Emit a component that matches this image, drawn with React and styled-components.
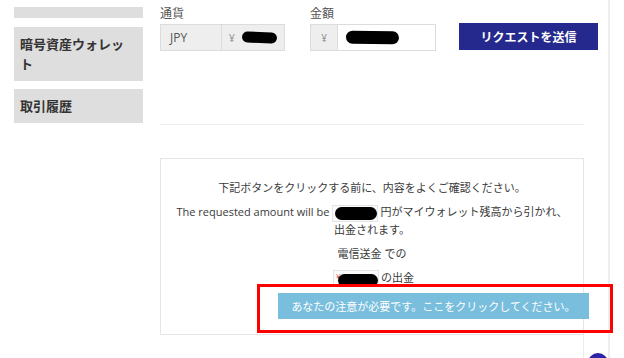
import React from 'react';
import styled, { createGlobalStyle } from 'styled-components';

const Global = createGlobalStyle`
  *, *::before, *::after { box-sizing: border-box; }
  html, body { margin: 0; padding: 0; background: #fff; }
  body {
    width: 624px;
    height: 358px;
    overflow: hidden;
    font-family: "Open Sans", "Noto Sans CJK JP", sans-serif;
    color: #333;
  }
`;

const Page = styled.div`
  position: relative;
  width: 624px;
  height: 358px;
  overflow: hidden;
  display: flex;
  padding-left: 14px;
`;

const Sidebar = styled.nav`
  width: 129px;
  margin-right: 17px;
  padding-top: 7px;
  display: flex;
  flex-direction: column;
  gap: 8px;
  flex-shrink: 0;
`;

const NavItem = styled.div`
  background: #dedede;
  font-family: "Noto Sans CJK JP", sans-serif;
  font-weight: 700;
  font-size: 13px;
  line-height: 20px;
  color: #333;
  padding: ${p => (p.$stub ? '0' : '7px 14px 7px 6px')};
  height: ${p => (p.$stub ? '11px' : 'auto')};
  margin-bottom: ${p => (p.$stub ? '1px' : '0')};
`;

const Main = styled.main`
  width: 424px;
  flex-shrink: 0;
  padding-top: 5px;
  display: flex;
  flex-direction: column;
`;

const FormRow = styled.div`
  display: flex;
  align-items: flex-end;
`;

const Field = styled.div`
  display: flex;
  flex-direction: column;
  flex-shrink: 0;
  margin-right: ${p => p.$mr || 0}px;
`;

const Label = styled.label`
  font-family: "Noto Sans CJK JP", sans-serif;
  font-size: 12px;
  line-height: 16px;
  color: #555;
  margin-bottom: 3px;
`;

const InputGroup = styled.div`
  display: flex;
  width: ${p => p.$w}px;
  height: 27px;
  border: 1px solid #dcdcdc;
`;

const Segment = styled.div`
  display: flex;
  align-items: center;
  width: ${p => (p.$w ? `${p.$w}px` : 'auto')};
  flex: ${p => (p.$w ? '0 0 auto' : '1 1 auto')};
  padding-left: ${p => p.$pl ?? 8}px;
  justify-content: ${p => (p.$center ? 'center' : 'flex-start')};
  background: ${p => (p.$white ? '#fff' : '#eeeeee')};
  border-left: ${p => (p.$first ? 'none' : '1px solid #dcdcdc')};
  font-size: 12px;
  color: #555;
`;

const Yen = styled.span`
  font-size: 10px;
  color: #888;
  margin-right: ${p => (p.$solo ? 0 : 7)}px;
`;

const Blob = styled.span`
  display: inline-block;
  flex-shrink: 0;
  width: ${p => p.$w}px;
  height: ${p => p.$h}px;
  margin-left: ${p => p.$ml || 0}px;
  margin-top: ${p => p.$mt || 0}px;
  background: #000;
  border-radius: ${p => p.$h / 2}px;
  transform: ${p => (p.$tilt ? `rotate(${p.$tilt}deg)` : 'none')};
`;

const SubmitButton = styled.button`
  flex-shrink: 0;
  width: 139px;
  height: 27px;
  margin-bottom: 1px;
  border: none;
  background: #25288c;
  color: #fff;
  font-family: "Noto Sans CJK JP", sans-serif;
  font-weight: 700;
  font-size: 12px;
  padding: 0;
  cursor: pointer;
`;

const Divider = styled.hr`
  margin: 73px 0 0;
  border: none;
  border-top: 1px solid #eeeeee;
  height: 0;
`;

const ConfirmBox = styled.section`
  position: relative;
  margin-top: 33px;
  border: 1px solid #e6e6e6;
  padding: 21px 12px 47px;
  text-align: center;
  font-size: 11px;
  line-height: 16px;
  color: #3a3a3a;

  &::after {
    content: '';
    position: absolute;
    right: -1px;
    top: 100%;
    width: 1px;
    height: 40px;
    background: #ececec;
  }
`;

const Para = styled.p`
  margin: 0 0 ${p => (p.$last ? 0 : 8)}px;
`;

const MaskBox = styled.span`
  display: inline-flex;
  align-items: center;
  vertical-align: middle;
  width: 46px;
  height: 17px;
  margin: 0 2px 0 3px;
  border: 1px solid #e4e4e4;
  background: #fafafa;
  padding-left: 2px;
  overflow: hidden;
`;

const RedMark = styled.span`
  font-size: 8px;
  line-height: 8px;
  color: #d33;
  align-self: flex-start;
  margin-top: 1px;
`;

const Rail = styled.div`
  width: 2px;
  margin-left: 24px;
  background: #eeeeee;
  align-self: stretch;
  flex-shrink: 0;
`;

const Annotation = styled.div`
  position: absolute;
  left: 257px;
  top: 284px;
  width: 356px;
  height: 49px;
  border: 3px solid #ff0000;
  padding: 6px 21px 0 18px;
`;

const AttentionButton = styled.button`
  display: block;
  width: 100%;
  height: 26px;
  border: none;
  background: #79bedd;
  color: #fff;
  font-family: "Noto Sans CJK JP", sans-serif;
  font-size: 11px;
  padding: 0;
  cursor: pointer;
`;

const ChatDot = styled.div`
  position: absolute;
  left: 588px;
  top: 353px;
  width: 20px;
  height: 20px;
  border-radius: 50%;
  background: radial-gradient(circle at 50% 60%, #4a3fd0 0%, #2b22a8 60%, #231c8f 100%);
`;

export default function App() {
  return (
    <>
      <Global />
      <Page>
        <Sidebar>
          <NavItem $stub />
          <NavItem>暗号資産ウォレット</NavItem>
          <NavItem>取引履歴</NavItem>
        </Sidebar>

        <Main>
          <FormRow>
            <Field $mr={25}>
              <Label>通貨</Label>
              <InputGroup $w={125}>
                <Segment $first $w={60} $pl={9}>JPY</Segment>
                <Segment $pl={7}>
                  <Yen>¥</Yen>
                  <Blob $w={35} $h={11} $tilt={2} />
                </Segment>
              </InputGroup>
            </Field>
            <Field $mr={23}>
              <Label>金額</Label>
              <InputGroup $w={126}>
                <Segment $first $w={26} $pl={0} $center>
                  <Yen $solo>¥</Yen>
                </Segment>
                <Segment $white $pl={8}>
                  <Blob $w={53} $h={13} $tilt={1} />
                </Segment>
              </InputGroup>
            </Field>
            <SubmitButton>リクエストを送信</SubmitButton>
          </FormRow>

          <Divider />

          <ConfirmBox>
            <Para>下記ボタンをクリックする前に、内容をよくご確認ください。</Para>
            <Para>
              The requested amount will be
              <MaskBox>
                <Blob $w={42} $h={13} />
              </MaskBox>
              円がマイウォレット残高から引かれ、出金されます。
            </Para>
            <Para>電信送金 での</Para>
            <Para $last>
              <MaskBox>
                <RedMark>¥</RedMark>
                <Blob $w={40} $h={13} $ml={-3} $mt={4} />
              </MaskBox>
              の出金
            </Para>
          </ConfirmBox>
        </Main>

        <Rail />

        <Annotation>
          <AttentionButton>あなたの注意が必要です。ここをクリックしてください。</AttentionButton>
        </Annotation>
        <ChatDot />
      </Page>
    </>
  );
}
